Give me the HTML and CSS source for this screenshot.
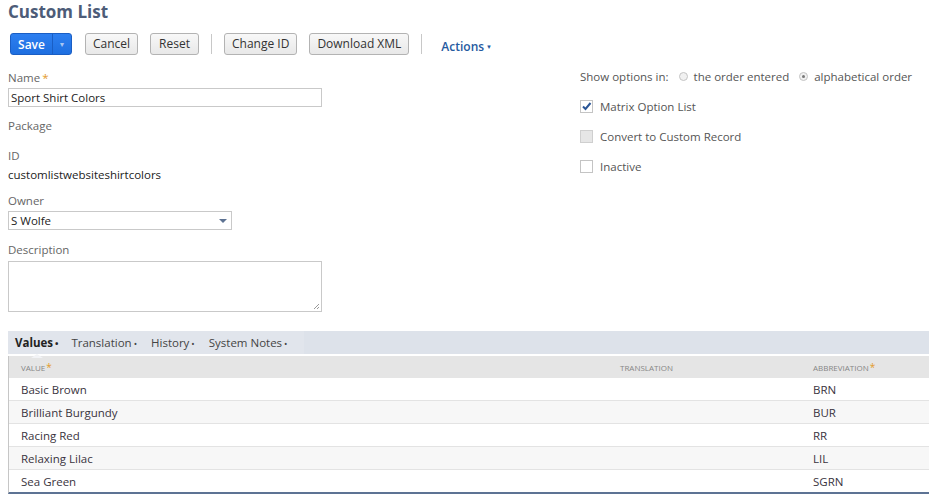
FILE: index.html
```html
<!DOCTYPE html>
<html>
<head>
<meta charset="utf-8">
<link rel="stylesheet" href="styles.css">
</head>
<body>
<div class="page">
  <h1 class="title">Custom List</h1>
  <div class="toolbar">
    <div class="btn-save"><span class="save-label">Save</span><span class="save-arrow">&#9660;</span></div>
    <button class="btn">Cancel</button>
    <button class="btn btn-reset">Reset</button>
    <span class="sep"></span>
    <button class="btn">Change ID</button>
    <button class="btn">Download XML</button>
    <span class="sep"></span>
    <a class="actions">Actions<span class="caret">&#9660;</span></a>
  </div>

  <div class="form">
    <div class="col-left">
      <div class="field f-name">
        <div class="label">Name<span class="req">*</span></div>
        <div class="input wide">Sport Shirt Colors</div>
      </div>
      <div class="field f-package">
        <div class="label">Package</div>
      </div>
      <div class="field f-id">
        <div class="label">ID</div>
        <div class="value">customlistwebsiteshirtcolors</div>
      </div>
      <div class="field f-owner">
        <div class="label">Owner</div>
        <div class="input select">S Wolfe<span class="sel-arrow"></span></div>
      </div>
      <div class="field f-desc">
        <div class="label">Description</div>
        <div class="textarea"><svg class="grip" width="7" height="7" viewBox="0 0 7 7"><path d="M6 1 L1 6 M6 4 L4 6" stroke="#999" stroke-width="1" fill="none"/></svg></div>
      </div>
    </div>
    <div class="col-right">
      <div class="show-opts">
        <span class="opt-label">Show options in:</span>
        <span class="radio"></span><span class="radio-text">the order entered</span>
        <span class="radio on"></span><span class="radio-text">alphabetical order</span>
      </div>
      <div class="check-row">
        <span class="cb"><svg width="11" height="11" viewBox="0 0 11 11"><path d="M2 5.5 L4.5 8 L9.5 2" stroke="#2a5596" stroke-width="2" fill="none"/></svg></span>
        <span>Matrix Option List</span>
      </div>
      <div class="check-row">
        <span class="cb disabled"></span>
        <span>Convert to Custom Record</span>
      </div>
      <div class="check-row">
        <span class="cb"></span>
        <span>Inactive</span>
      </div>
    </div>
  </div>

  <div class="tabs">
    <div class="tab-group">
      <span class="tab active">Values<i>&bull;</i></span>
      <span class="tab">Translation<i>&bull;</i></span>
      <span class="tab">History<i>&bull;</i></span>
      <span class="tab">System Notes<i>&bull;</i></span>
    </div>
  </div>
  <div class="table">
    <div class="row head">
      <span class="c1">Value<span class="req">*</span></span>
      <span class="c2">Translation</span>
      <span class="c3">Abbreviation<span class="req">*</span></span>
    </div>
    <div class="row"><span class="c1">Basic Brown</span><span class="c2"></span><span class="c3">BRN</span></div>
    <div class="row alt"><span class="c1">Brilliant Burgundy</span><span class="c2"></span><span class="c3">BUR</span></div>
    <div class="row"><span class="c1">Racing Red</span><span class="c2"></span><span class="c3">RR</span></div>
    <div class="row alt"><span class="c1">Relaxing Lilac</span><span class="c2"></span><span class="c3">LIL</span></div>
    <div class="row last"><span class="c1">Sea Green</span><span class="c2"></span><span class="c3">SGRN</span></div>
  </div>
</div>
</body>
</html>
```
FILE: styles.css
```css
* { box-sizing: border-box; }
body {
  margin: 0;
  font-family: "Open Sans", "Liberation Sans", sans-serif;
  font-size: 11px;
  color: #333;
  background: #fff;
  overflow: hidden;
}
.page { padding-left: 8px; }

.title {
  margin: 0;
  font-size: 17px;
  font-weight: 700;
  line-height: 24px;
  color: #4d5c78;
}

.toolbar {
  display: flex;
  align-items: center;
  margin-top: 9px;
  height: 22px;
}
.btn-save {
  display: flex;
  height: 22px;
  margin-left: 2px;
  width: 62px;
  background: linear-gradient(#2d7ff0, #1e6fe0);
  border: 1px solid #1a5ec4;
  border-radius: 3px;
  color: #fff;
  font-size: 12px;
  font-weight: 600;
  margin-right: 13px;
}
.save-label {
  width: 42px;
  display: flex;
  align-items: center;
  justify-content: center;
  border-right: 1px solid #1a5ec4;
}
.save-arrow {
  flex: 1;
  display: flex;
  align-items: center;
  justify-content: center;
  font-size: 7px;
  color: #a8c6f2;
}
.btn {
  font-family: inherit;
  font-size: 12px;
  color: #333;
  height: 22px;
  padding: 0 7px;
  background: linear-gradient(#f8f8f8, #e8e8e8);
  border: 1px solid #b3b3b3;
  border-radius: 3px;
  margin-right: 12px;
  line-height: 20px;
}
.btn-reset { padding: 0 8px; }
.sep {
  width: 1px;
  height: 20px;
  background: #c8c8c8;
  margin-right: 12px;
}
.actions {
  margin-left: 7px;
  margin-top: 5px;
  font-size: 12px;
  font-weight: 600;
  color: #255aa0;
}
.caret { font-size: 6px; margin-left: 2px; vertical-align: 2px; }

.form {
  display: flex;
  margin-top: 15px;
}
.col-left { width: 314px; }
.col-right { margin-left: 258px; margin-top: -2px; }

.label {
  line-height: 16px;
  color: #666;
  font-size: 11.5px;
}
.req { color: #e39b2b; margin-left: 2px; }
.field { display: flex; flex-direction: column; }
.f-package { margin-top: 11px; }
.f-id { margin-top: 14px; }
.f-owner { margin-top: 10px; }
.f-desc { margin-top: 12px; }

.input {
  margin-top: 2px;
  height: 19px;
  border: 1px solid #c9c9c9;
  padding: 0 2px;
  line-height: 17px;
  font-size: 11.5px;
  color: #222;
}
.input.wide { width: 314px; }
.input.select {
  width: 224px;
  position: relative;
}
.sel-arrow {
  position: absolute;
  right: 4px;
  top: 7px;
  border-left: 4px solid transparent;
  border-right: 4px solid transparent;
  border-top: 4px solid #5d7292;
}
.value {
  margin-top: 3px;
  line-height: 16px;
  font-size: 11.5px;
  color: #222;
}
.textarea {
  margin-top: 3px;
  width: 314px;
  height: 51px;
  border: 1px solid #c9c9c9;
  position: relative;
}
.grip { position: absolute; right: 1px; bottom: 1px; }

.show-opts {
  display: flex;
  align-items: center;
  height: 16px;
  font-size: 11.5px;
  color: #555;
}
.opt-label { margin-right: 10px; }
.radio {
  width: 9px;
  height: 9px;
  border-radius: 50%;
  border: 1px solid #c4c4c4;
  background: #f1f1f1;
  margin-right: 6px;
  position: relative;
}
.radio.on::after {
  content: "";
  position: absolute;
  left: 2px; top: 2px;
  width: 3px; height: 3px;
  border-radius: 50%;
  background: #777;
}
.radio-text { margin-right: 10px; }
.check-row {
  display: flex;
  align-items: center;
  height: 16px;
  margin-top: 14px;
  font-size: 11.5px;
  color: #555;
}
.check-row + .check-row { margin-top: 14px; }
.cb {
  width: 13px;
  height: 13px;
  border: 1px solid #c4c4c4;
  background: #fff;
  margin-right: 7px;
  display: flex;
  align-items: center;
  justify-content: center;
}
.cb.disabled { background: #e6e6e6; border-color: #cfcfcf; }

.tabs {
  margin-top: 19px;
  background: #dde2ea;
  border-bottom: 1px solid #fff;
  height: 24px;
}
.tab-group {
  display: inline-flex;
  height: 23px;
  background: #e1e5ec;
  align-items: center;
  padding-left: 7px;
  padding-right: 2px;
  white-space: nowrap;
}
.tab {
  font-size: 11.5px;
  color: #444;
  margin-right: 14px;
  position: relative;
}
.tab:first-child { margin-right: 13px; }
.tab i { font-style: normal; font-size: 9px; margin-left: 2px; }
.tab.active { font-weight: 700; color: #222; }
.tab.active::after {
  content: "";
  position: absolute;
  left: 16px;
  bottom: -8px;
  border-left: 6px solid transparent;
  border-right: 6px solid transparent;
  border-bottom: 4px solid #f2f3f6;
}

.table {
  margin-top: 1px;
  border-left: 1px solid #c6c6c6;
  border-bottom: 2px solid #5d7394;
}
.row {
  display: flex;
  align-items: center;
  height: 23px;
  border-bottom: 1px solid #e3e3e3;
  font-size: 11.5px;
  color: #3a3440;
}
.row.last { border-bottom: none; height: 22px; }
.row.alt { background: #f7f7f7; }
.row.head {
  background: #e5e5e5;
  height: 22px;
  border-bottom: none;
  font-size: 8px;
  text-transform: uppercase;
  color: #858585;
}
.row.head .req { font-size: 10px; margin-left: 1px; }
.c1 { width: 611px; padding-left: 12px; }
.c2 { width: 193px; }
.c3 { flex: 1; }
```
